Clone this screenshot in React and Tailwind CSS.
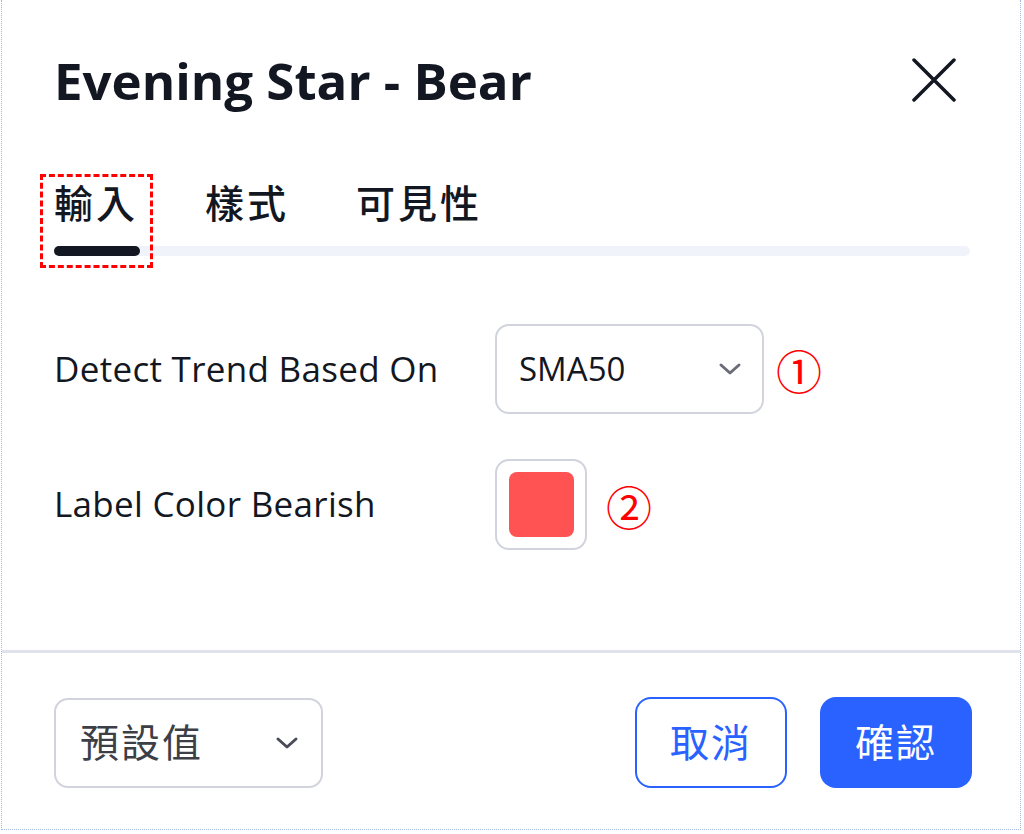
import React from 'react';

const Chevron = ({ className = '' }) => (
  <svg viewBox="0 0 24 14" className={className} fill="none" stroke="currentColor" strokeWidth="3" strokeLinecap="round" strokeLinejoin="round">
    <path d="M3 3l9 8 9-8" />
  </svg>
);

export default function App() {
  return (
    <div className="w-[1024px] h-[834px] bg-white overflow-hidden" style={{ fontFamily: '"Open Sans", "Noto Sans CJK TC", sans-serif' }}>
      <div className="relative w-[1020px] h-[830px] ml-px border-l border-r border-b border-dotted border-[#9fb8dc] flex flex-col">
        {/* Header */}
        <div className="flex items-center justify-between h-[80px] mt-[40px] pl-[52px] pr-[64px]">
          <h1 className="text-[51px] font-bold text-[#131722] leading-none">Evening Star - Bear</h1>
          <svg viewBox="0 0 44 44" className="w-[44px] h-[44px] text-[#131722]" fill="none" stroke="currentColor" strokeWidth="3.5" strokeLinecap="round">
            <path d="M2 2l40 40M42 2L2 42" />
          </svg>
        </div>

        {/* Tabs */}
        <div className="relative mt-[58px] ml-[52px] mr-[50px]">
          <div className="flex items-center gap-[67px] h-[50px] text-[39px] font-medium text-[#131722] tracking-[3px]">
            <span>輸入</span>
            <span>樣式</span>
            <span>可見性</span>
          </div>
          <div className="relative mt-[18px] h-[10px] rounded-full bg-[#f0f3fa]">
            <div className="absolute left-0 top-0 h-[10px] w-[86px] rounded-full bg-[#131722]" />
          </div>
          <div className="absolute left-[-14px] top-[-4px] w-[113px] h-[94px] border-[3px] border-dashed border-[#ff0000]" />
        </div>

        {/* Inputs */}
        <div className="flex flex-col pl-[52px] mt-[68px]">
          <div className="flex items-center h-[90px]">
            <span className="w-[441px] text-[35px] text-[#131722] tracking-[0.3px]">Detect Trend Based On</span>
            <div className="flex items-center justify-between w-[269px] h-[90px] rounded-[14px] border-2 border-[#d1d4dc] pl-[22px] pr-[20px]">
              <span className="text-[33px] text-[#131722]">SMA50</span>
              <Chevron className="w-[24px] h-[14px] text-[#6a6d78]" />
            </div>
            <span className="ml-[12px] text-[46px] leading-none text-[#ff0000]" style={{ fontFamily: '"Noto Sans CJK JP", sans-serif' }}>①</span>
          </div>
          <div className="flex items-center h-[91px] mt-[45px]">
            <span className="w-[441px] text-[35px] text-[#131722] tracking-[0.3px]">Label Color Bearish</span>
            <div className="flex items-center justify-center w-[92px] h-[91px] rounded-[14px] border-2 border-[#d1d4dc]">
              <div className="w-[65px] h-[65px] rounded-[8px] bg-[#ff5252]" />
            </div>
            <span className="ml-[19px] text-[46px] leading-none text-[#ff0000]" style={{ fontFamily: '"Noto Sans CJK JP", sans-serif' }}>②</span>
          </div>
        </div>

        {/* Divider */}
        <div className="mt-[100px] h-[3px] bg-[#e0e3eb]" />

        {/* Footer */}
        <div className="flex items-center justify-between pl-[52px] pr-[48px] mt-[44px]">
          <div className="flex items-center justify-between w-[269px] h-[90px] rounded-[14px] border-2 border-[#d1d4dc] pl-[24px] pr-[22px]">
            <span className="text-[39px] text-[#3d3f47] tracking-[2px]">預設值</span>
            <Chevron className="w-[24px] h-[14px] text-[#4a4d57]" />
          </div>
          <div className="flex items-center gap-[33px]">
            <button className="w-[152px] h-[91px] rounded-[16px] border-2 border-[#2962ff] text-[39px] text-[#2962ff] tracking-[2px]">取消</button>
            <button className="w-[152px] h-[91px] rounded-[16px] bg-[#2962ff] text-[39px] text-white tracking-[2px]">確認</button>
          </div>
        </div>
      </div>
    </div>
  );
}
